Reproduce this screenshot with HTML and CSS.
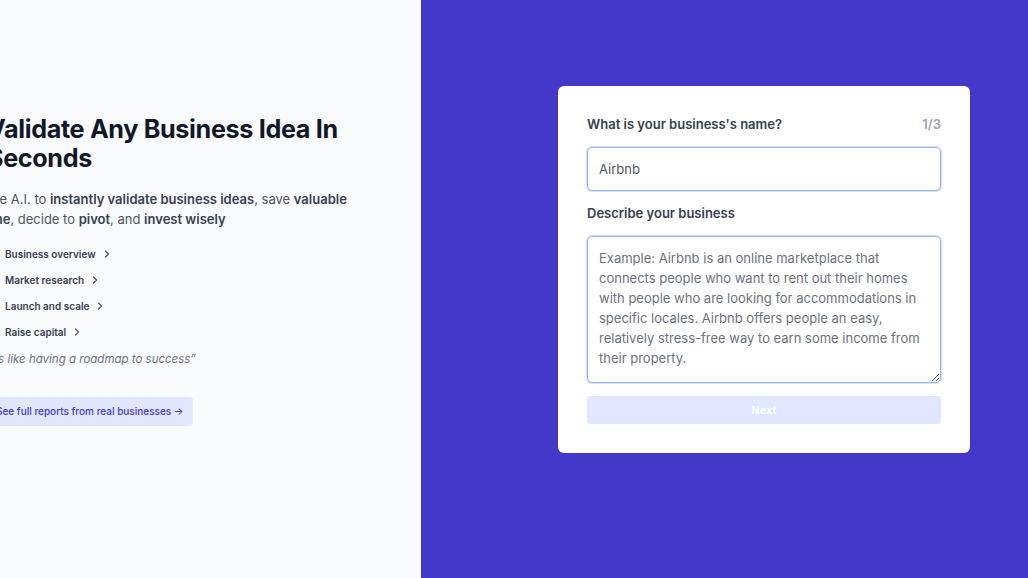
FILE: index.html
```html
<!DOCTYPE html>
<html lang="en">
<head>
    <meta charset="UTF-8">
    <meta name="viewport" content="width=device-width, initial-scale=1.0">
    <title>Validate Any Business Idea</title>
    <link rel="stylesheet" href="styles.css">
</head>
<body>
    <div class="split">
        <section class="intro">
            <div class="intro-inner">
                <h1 class="headline">Validate Any Business Idea In Seconds</h1>
                <p class="lead">Use A.I. to <b>instantly validate business ideas</b>, save <b>valuable time</b>, decide to <b>pivot</b>, and <b>invest wisely</b></p>

                <ul class="features">
                    <li class="feature"><span class="feature-dot"></span>Business overview
                        <svg class="chev" viewBox="0 0 10 10"><path d="M3.5 2l3 3-3 3"/></svg></li>
                    <li class="feature"><span class="feature-dot"></span>Market research
                        <svg class="chev" viewBox="0 0 10 10"><path d="M3.5 2l3 3-3 3"/></svg></li>
                    <li class="feature"><span class="feature-dot"></span>Launch and scale
                        <svg class="chev" viewBox="0 0 10 10"><path d="M3.5 2l3 3-3 3"/></svg></li>
                    <li class="feature"><span class="feature-dot"></span>Raise capital
                        <svg class="chev" viewBox="0 0 10 10"><path d="M3.5 2l3 3-3 3"/></svg></li>
                </ul>

                <p class="quote">&ldquo;It&rsquo;s like having a roadmap to success&rdquo;</p>

                <a class="reports-btn" href="#">See full reports from real businesses &rarr;</a>
            </div>
        </section>

        <section class="form-side">
            <form class="card" onsubmit="return false">
                <div class="card-head">
                    <label class="field-label" for="name">What is your business's name?</label>
                    <span class="step">1/3</span>
                </div>
                <input class="text-input" id="name" type="text" value="Airbnb">

                <label class="field-label desc-label" for="desc">Describe your business</label>
                <textarea class="text-area" id="desc" placeholder="Example: Airbnb is an online marketplace that connects people who want to rent out their homes with people who are looking for accommodations in specific locales. Airbnb offers people an easy, relatively stress-free way to earn some income from their property."></textarea>

                <button class="next-btn" type="submit" disabled>Next</button>
            </form>
        </section>
    </div>
</body>
</html>
```

FILE: styles.css
```css
body {
    font-family: Inter, "Liberation Sans", sans-serif;
    margin: 0;
    padding: 0;
    color: #111827;
}

.split {
    display: flex;
    height: 578px;
}

.intro {
    width: 421px;
    flex-shrink: 0;
    background-color: #f8fafc;
    overflow: hidden;
}

.intro-inner {
    margin-left: -13px;
    padding-top: 115px;
    width: 372px;
}

.headline {
    margin: 0;
    font-size: 25.2px;
    line-height: 29px;
    font-weight: 700;
    letter-spacing: -0.35px;
    color: #111827;
}

.lead {
    margin: 16px 0 0 -4px;
    font-size: 13px;
    line-height: 20px;
    color: #4b5563;
}

.lead b {
    font-weight: 600;
    color: #374151;
}

.features {
    list-style: none;
    margin: 17px 0 0;
    padding: 0;
    display: flex;
    flex-direction: column;
    gap: 10px;
}

.feature {
    display: flex;
    align-items: center;
    font-size: 10px;
    line-height: 16px;
    font-weight: 600;
    color: #374151;
}

.feature-dot {
    width: 14px;
    height: 14px;
    margin-right: 4px;
}

.chev {
    width: 10px;
    height: 10px;
    margin-left: 6px;
    fill: none;
    stroke: #4b5563;
    stroke-width: 1.2;
    stroke-linecap: round;
    stroke-linejoin: round;
}

.quote {
    margin: 10px 0 0 -4px;
    font-size: 11.5px;
    line-height: 18px;
    font-style: italic;
    color: #6b7280;
}

.reports-btn {
    display: inline-block;
    margin-top: 29px;
    padding: 0 10px 0 9px;
    line-height: 29px;
    font-size: 10px;
    font-weight: 500;
    color: #4338ca;
    background-color: #e0e7ff;
    border-radius: 4px;
    text-decoration: none;
}

.form-side {
    flex: 1;
    background-color: #4338ca;
    padding: 86px 0 0 137px;
}

.card {
    width: 354px;
    padding: 28px 29px 29px;
    background-color: #ffffff;
    border-radius: 6px;
    display: flex;
    flex-direction: column;
}

.card-head {
    display: flex;
    justify-content: space-between;
    align-items: center;
}

.field-label {
    font-size: 13px;
    line-height: 20px;
    font-weight: 600;
    color: #374151;
}

.step {
    font-size: 13px;
    line-height: 20px;
    font-weight: 600;
    color: #9ca3af;
}

.text-input, .text-area {
    box-sizing: border-box;
    width: 100%;
    margin: 13px 0 0;
    font-family: inherit;
    font-size: 13px;
    line-height: 20px;
    color: #4b5563;
    background-color: #ffffff;
    border: 1px solid #93b4f2;
    box-shadow: 0 0 0 1px #d6e2fb;
    border-radius: 5px;
    outline: none;
}

.text-input {
    height: 44px;
    padding: 0 11px;
}

.desc-label {
    margin-top: 12px;
}

.text-area {
    height: 147px;
    padding: 11px 11px;
    resize: vertical;
}

.text-area::placeholder {
    color: #6b7280;
    opacity: 1;
}

.next-btn {
    margin-top: 13px;
    height: 28px;
    border: none;
    border-radius: 4px;
    background-color: #e0e7ff;
    color: #ffffff;
    font-family: inherit;
    font-size: 11px;
    font-weight: 700;
}
```
